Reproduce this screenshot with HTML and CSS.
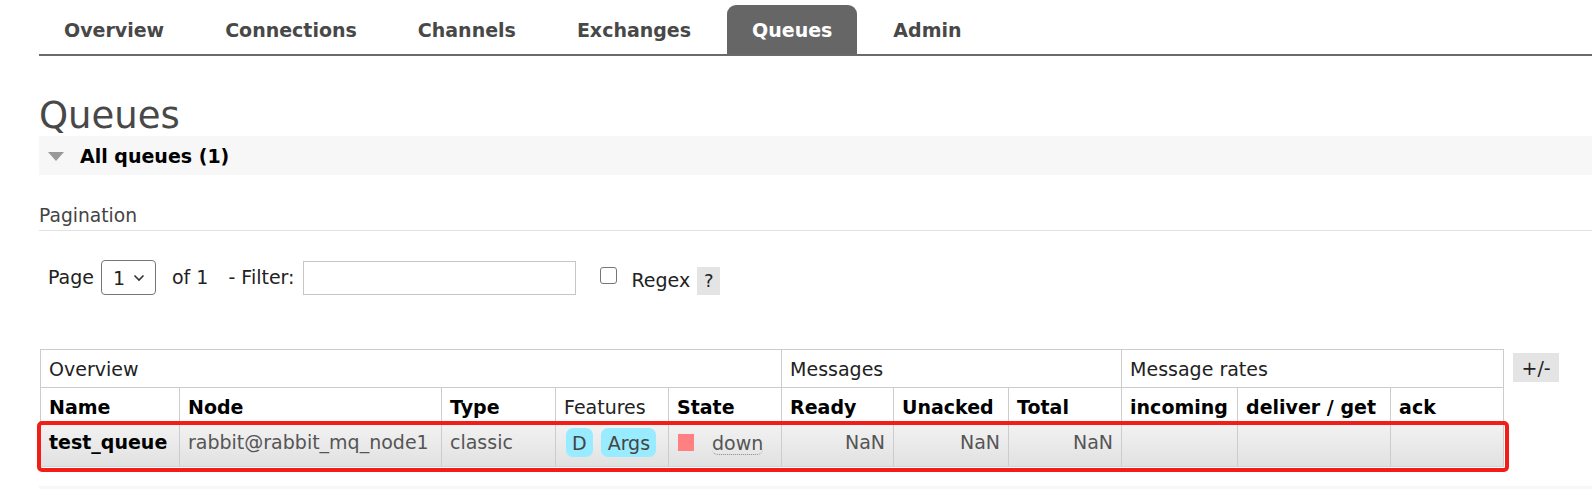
FILE: index.html
```html
<!DOCTYPE html>
<html>
<head>
<meta charset="utf-8">
<link rel="stylesheet" href="styles.css">
</head>
<body>
<div class="page">
  <nav class="menu">
    <ul>
      <li><a>Overview</a></li>
      <li><a>Connections</a></li>
      <li><a>Channels</a></li>
      <li><a>Exchanges</a></li>
      <li><a class="selected">Queues</a></li>
      <li><a>Admin</a></li>
    </ul>
  </nav>
  <h1>Queues</h1>
  <div class="section">
    <h2><span class="tri"></span>All queues (1)</h2>
    <div class="hider">
      <h3>Pagination</h3>
      <div class="pager">
        <span class="lbl">Page</span>
        <span class="select">1<svg width="12" height="8" viewBox="0 0 12 8"><path d="M1.5 1.5 L6 6 L10.5 1.5" fill="none" stroke="#333" stroke-width="1.6"/></svg></span>
        <span class="lbl of">of 1</span>
        <span class="lbl">- Filter:</span>
        <span class="input"></span>
        <span class="check"></span>
        <span class="lbl regex">Regex</span>
        <span class="help">?</span>
      </div>
      <div class="table-area">
        <div class="table-wrap">
          <table>
            <colgroup>
              <col class="c1"><col class="c2"><col class="c3"><col class="c4"><col class="c5">
              <col class="c6"><col class="c7"><col class="c8">
              <col class="c9"><col class="c10"><col class="c11">
            </colgroup>
            <thead>
              <tr class="group">
                <th colspan="5">Overview</th>
                <th colspan="3">Messages</th>
                <th colspan="3">Message rates</th>
              </tr>
              <tr class="cols">
                <th>Name</th>
                <th>Node</th>
                <th>Type</th>
                <th class="plain">Features</th>
                <th>State</th>
                <th>Ready</th>
                <th>Unacked</th>
                <th>Total</th>
                <th>incoming</th>
                <th>deliver / get</th>
                <th>ack</th>
              </tr>
            </thead>
            <tbody>
              <tr class="data">
                <td class="name">test_queue</td>
                <td>rabbit@rabbit_mq_node1</td>
                <td>classic</td>
                <td><span class="badge">D</span><span class="badge args">Args</span></td>
                <td><span class="state-box"></span><span class="state">down</span></td>
                <td class="num">NaN</td>
                <td class="num">NaN</td>
                <td class="num">NaN</td>
                <td></td>
                <td></td>
                <td></td>
              </tr>
            </tbody>
          </table>
          <div class="highlight"></div>
        </div>
        <span class="toggle">+/-</span>
      </div>
    </div>
  </div>
  <div class="section next"></div>
</div>
</body>
</html>
```

FILE: styles.css
```css
* { box-sizing: border-box; }
html, body { margin: 0; padding: 0; background: #fff; }
body {
  font-family: "DejaVu Sans", Verdana, sans-serif;
  font-size: 19px;
  color: #444;
  overflow: hidden;
}
.page { padding-left: 39px; }

.menu ul {
  list-style: none;
  margin: 0;
  padding: 5px 0 0 0;
  display: flex;
  border-bottom: 2px solid #6a6a6a;
}
.menu li { margin-right: 11px; }
.menu a {
  display: block;
  height: 49px;
  line-height: 50px;
  padding: 0 25px;
  font-weight: bold;
  font-size: 19px;
  color: #484848;
  border-radius: 9px 9px 0 0;
}
.menu a.selected { background: #666; color: #fff; }

h1 {
  margin: 39px 0 0 0;
  font-size: 37px;
  font-weight: normal;
  line-height: 42px;
  color: #484848;
  height: 41px;
}

.section h2 {
  margin: 0;
  height: 39px;
  background: #f7f7f7;
  font-size: 19px;
  font-weight: bold;
  color: #000;
  display: flex;
  align-items: center;
  padding-left: 9px;
}
.tri {
  width: 0; height: 0;
  border-left: 8px solid transparent;
  border-right: 8px solid transparent;
  border-top: 9px solid #999;
  margin-right: 16px;
  margin-top: 2px;
}
.hider { padding-top: 27px; }
h3 {
  margin: 0;
  font-size: 18.7px;
  font-weight: normal;
  color: #444;
  line-height: 28px;
  padding-bottom: 0px;
  border-bottom: 1px solid #e2e2e2;
}

.pager {
  display: flex;
  align-items: center;
  margin-top: 29px;
  padding-left: 9px;
  height: 35px;
  color: #222;
}
.lbl { line-height: 35px; }
.select {
  width: 55px;
  height: 35px;
  border: 1px solid #767676;
  border-radius: 4px;
  margin-left: 7px;
  display: flex;
  align-items: center;
  justify-content: space-between;
  padding: 0 10px 0 11px;
  color: #222;
}
.of { margin-left: 16px; }
.of + .lbl { margin-left: 20px; }
.input {
  width: 273px;
  height: 34px;
  border: 1px solid #c6c6c6;
  margin-left: 9px;
}
.check {
  width: 17px;
  height: 17px;
  border: 1px solid #767676;
  border-radius: 3px;
  margin-left: 24px;
  margin-top: -4px;
}
.regex { margin-left: 14px; margin-top: 6px; }
.help {
  background: #e4e4e4;
  width: 23px;
  height: 28px;
  margin-left: 7px;
  margin-top: 6px;
  display: flex;
  align-items: center;
  justify-content: center;
  font-size: 18px;
}

.table-area {
  margin-top: 54px;
  display: flex;
  align-items: flex-start;
  padding-left: 1px;
}
.table-wrap { position: relative; }
table {
  border-collapse: collapse;
  table-layout: fixed;
  width: 1463px;
  border: 1px solid #ccc;
}
col.c1 { width: 139px; }
col.c2 { width: 262px; }
col.c3 { width: 114px; }
col.c4 { width: 113px; }
col.c5 { width: 113px; }
col.c6 { width: 112px; }
col.c7 { width: 115px; }
col.c8 { width: 113px; }
col.c9 { width: 116px; }
col.c10 { width: 153px; }
col.c11 { width: 113px; }

th, td {
  border: 1px solid #ccc;
  padding: 0 8px;
  text-align: left;
  white-space: nowrap;
  overflow: hidden;
}
thead th { color: #000; }
tr.group th { font-weight: normal; height: 38px; color: #222; }
tr.cols th { font-weight: bold; height: 36px; padding-top: 3px; }
tr.cols th.plain { font-weight: normal; color: #222; }

tr.data td {
  height: 43px;
  background: linear-gradient(#f2f2f2, #e1e1e1);
  color: #555;
  border-bottom: 1px solid #d4d4d4;
  border-top: 1px solid #ccc;
  padding-bottom: 6px;
}
tr.data td.name { color: #000; font-weight: bold; }
tr.data td.num { text-align: right; color: #555; }

.badge {
  display: inline-block;
  background: #99ebff;
  border-radius: 7px;
  height: 29px;
  line-height: 30px;
  padding: 0 6px;
  color: #444;
  margin-left: 2px;
  vertical-align: middle;
}
.badge.args { margin-left: 8px; padding: 0 6px 0 7px; }
.state-box {
  display: inline-block;
  width: 16px;
  height: 17px;
  background: #ff8080;
  vertical-align: middle;
  margin-left: 1px;
  margin-right: 18px;
}
.state {
  border-bottom: 1px dotted #888;
  border-radius: 0 0 6px 6px;
  vertical-align: middle;
}

.highlight {
  position: absolute;
  left: -3px;
  top: 72px;
  width: 1472px;
  height: 51px;
  border: 4px solid #f21d17;
  border-radius: 5px;
}

.toggle {
  margin-left: 9px;
  margin-top: 4px;
  background: #e4e4e4;
  width: 46px;
  height: 29px;
  display: flex;
  align-items: center;
  justify-content: center;
  color: #222;
}

.section.next {
  margin-top: 19px;
  height: 30px;
  background: #f7f7f7;
}
```
